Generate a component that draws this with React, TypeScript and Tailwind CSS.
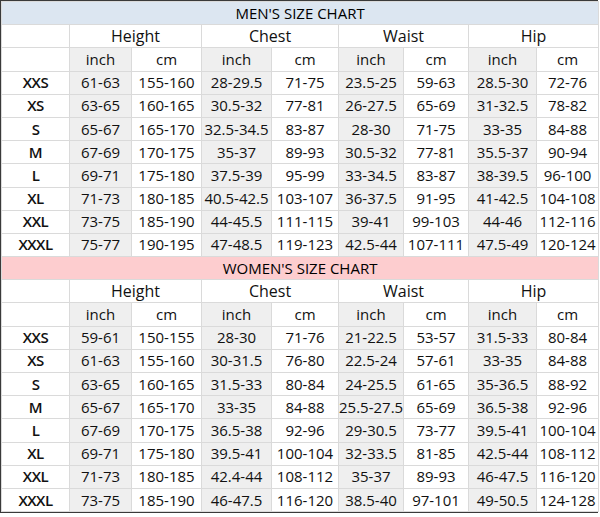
import React from 'react';

type Row = [string, string, string, string, string, string, string, string, string];

const menRows: Row[] = [
  ['XXS', '61-63', '155-160', '28-29.5', '71-75', '23.5-25', '59-63', '28.5-30', '72-76'],
  ['XS', '63-65', '160-165', '30.5-32', '77-81', '26-27.5', '65-69', '31-32.5', '78-82'],
  ['S', '65-67', '165-170', '32.5-34.5', '83-87', '28-30', '71-75', '33-35', '84-88'],
  ['M', '67-69', '170-175', '35-37', '89-93', '30.5-32', '77-81', '35.5-37', '90-94'],
  ['L', '69-71', '175-180', '37.5-39', '95-99', '33-34.5', '83-87', '38-39.5', '96-100'],
  ['XL', '71-73', '180-185', '40.5-42.5', '103-107', '36-37.5', '91-95', '41-42.5', '104-108'],
  ['XXL', '73-75', '185-190', '44-45.5', '111-115', '39-41', '99-103', '44-46', '112-116'],
  ['XXXL', '75-77', '190-195', '47-48.5', '119-123', '42.5-44', '107-111', '47.5-49', '120-124'],
];

const womenRows: Row[] = [
  ['XXS', '59-61', '150-155', '28-30', '71-76', '21-22.5', '53-57', '31.5-33', '80-84'],
  ['XS', '61-63', '155-160', '30-31.5', '76-80', '22.5-24', '57-61', '33-35', '84-88'],
  ['S', '63-65', '160-165', '31.5-33', '80-84', '24-25.5', '61-65', '35-36.5', '88-92'],
  ['M', '65-67', '165-170', '33-35', '84-88', '25.5-27.5', '65-69', '36.5-38', '92-96'],
  ['L', '67-69', '170-175', '36.5-38', '92-96', '29-30.5', '73-77', '39.5-41', '100-104'],
  ['XL', '69-71', '175-180', '39.5-41', '100-104', '32-33.5', '81-85', '42.5-44', '108-112'],
  ['XXL', '71-73', '180-185', '42.4-44', '108-112', '35-37', '89-93', '46-47.5', '116-120'],
  ['XXXL', '73-75', '185-190', '46-47.5', '116-120', '38.5-40', '97-101', '49-50.5', '124-128'],
];

const groups = ['Height', 'Chest', 'Waist', 'Hip'];
const colWidths = ['w-[68px]', 'w-[62px]', 'w-[70px]', 'w-[70px]', 'w-[67px]', 'w-[65px]', 'w-[65px]', 'w-[68px]', 'w-[62px]'];

const cell = 'border border-[#dadada] h-[23.2px] p-0 text-center align-middle leading-none whitespace-nowrap';

function Section({ title, rows, titleBg }: { title: string; rows: Row[]; titleBg: string }) {
  return (
    <>
      <tr>
        <td colSpan={9} className={`${cell} ${titleBg} text-[15px] text-black`}>{title}</td>
      </tr>
      <tr>
        <td className={`${cell} bg-white`}></td>
        {groups.map((g) => (
          <td key={g} colSpan={2} className={`${cell} bg-white text-[16px]`}>{g}</td>
        ))}
      </tr>
      <tr>
        <td className={`${cell} bg-white`}></td>
        {groups.map((g) => (
          <React.Fragment key={g}>
            <td className={`${cell} bg-[#efefef] text-[15px]`}>inch</td>
            <td className={`${cell} bg-white text-[15px]`}>cm</td>
          </React.Fragment>
        ))}
      </tr>
      {rows.map((r) => (
        <tr key={r[0]}>
          {r.map((v, i) => (
            <td
              key={i}
              className={`${cell} text-[15px] ${i === 0 ? 'font-semibold tracking-[-0.5px] bg-white' : i % 2 === 1 ? 'bg-[#efefef]' : 'bg-white'}`}
            >
              {v}
            </td>
          ))}
        </tr>
      ))}
    </>
  );
}

export default function App() {
  return (
    <div className="w-[600px] h-[517px] bg-white" style={{ fontFamily: '"Open Sans", "Noto Sans", sans-serif' }}>
      <div className="w-[598px] border border-[#3a3a3a] text-[#111]">
        <table className="table-fixed border-collapse w-full">
          <colgroup>
            {colWidths.map((w, i) => (
              <col key={i} className={w} />
            ))}
          </colgroup>
          <tbody>
            <Section title="MEN'S SIZE CHART" rows={menRows} titleBg="bg-[#dce6f1]" />
            <Section title="WOMEN'S SIZE CHART" rows={womenRows} titleBg="bg-[#fdcdcf]" />
          </tbody>
        </table>
      </div>
    </div>
  );
}
